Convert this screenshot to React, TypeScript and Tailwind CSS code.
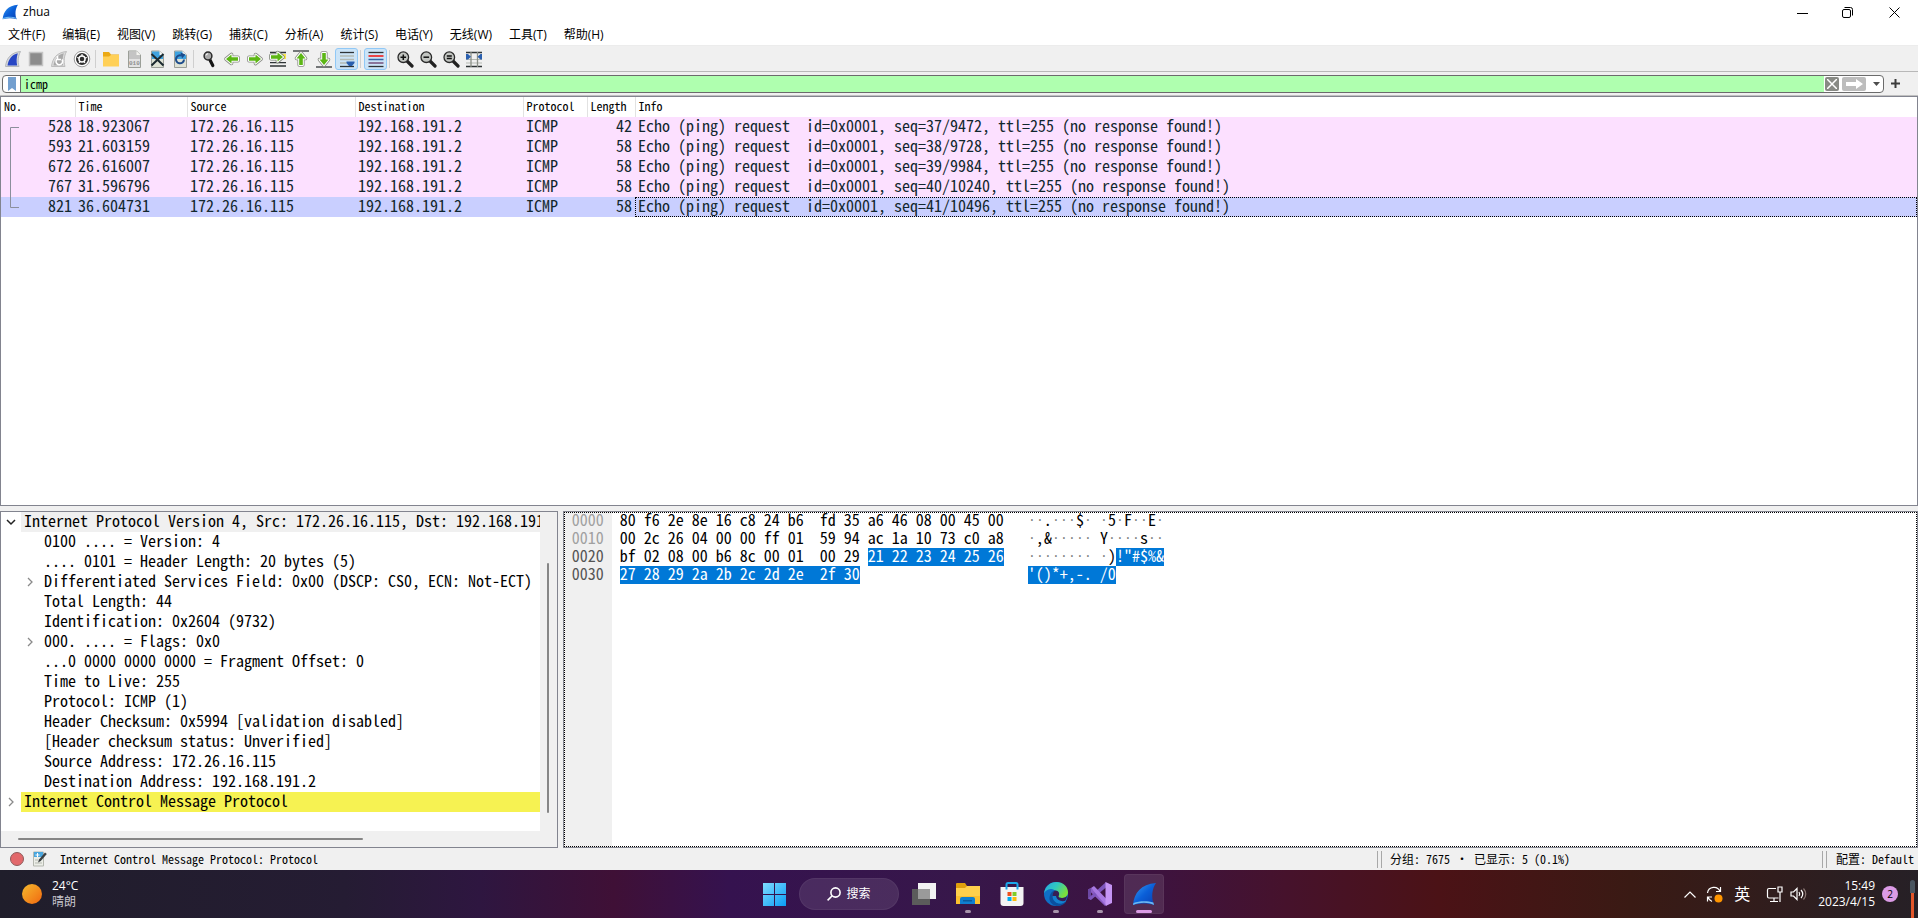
import React, { useState } from "react";

const mono =
  "font-['Noto_Sans_Mono_CJK_SC','Liberation_Mono','Noto_Sans_CJK_SC',monospace]";
const sans = "font-['Open_Sans','Noto_Sans_CJK_SC',sans-serif]";

const menus = [
  "文件(F)",
  "编辑(E)",
  "视图(V)",
  "跳转(G)",
  "捕获(C)",
  "分析(A)",
  "统计(S)",
  "电话(Y)",
  "无线(W)",
  "工具(T)",
  "帮助(H)",
];

const columns = [
  { name: "No.", width: "w-[74px]" },
  { name: "Time", width: "w-[112px]" },
  { name: "Source", width: "w-[168px]" },
  { name: "Destination", width: "w-[168px]" },
  { name: "Protocol", width: "w-[64px]" },
  { name: "Length", width: "w-[48px]" },
  { name: "Info", width: "" },
];

const packets = [
  { no: 528, time: "18.923067", length: 42, seq: "37/9472" },
  { no: 593, time: "21.603159", length: 58, seq: "38/9728" },
  { no: 672, time: "26.616007", length: 58, seq: "39/9984" },
  { no: 767, time: "31.596796", length: 58, seq: "40/10240" },
  { no: 821, time: "36.604731", length: 58, seq: "41/10496" },
];

const fields = [
  { text: "0100 .... = Version: 4" },
  { text: ".... 0101 = Header Length: 20 bytes (5)" },
  {
    text: "Differentiated Services Field: 0x00 (DSCP: CS0, ECN: Not-ECT)",
    branch: true,
  },
  { text: "Total Length: 44" },
  { text: "Identification: 0x2604 (9732)" },
  { text: "000. .... = Flags: 0x0", branch: true },
  { text: "...0 0000 0000 0000 = Fragment Offset: 0" },
  { text: "Time to Live: 255" },
  { text: "Protocol: ICMP (1)" },
  { text: "Header Checksum: 0x5994 [validation disabled]" },
  { text: "[Header checksum status: Unverified]" },
  { text: "Source Address: 172.26.16.115" },
  { text: "Destination Address: 192.168.191.2" },
];

const hexRows = [
  {
    offset: "0000",
    hex: "80 f6 2e 8e 16 c8 24 b6  fd 35 a6 46 08 00 45 00",
    hexSel: "",
    ascii: "··.···$· ·5·F··E·",
    asciiSel: "",
  },
  {
    offset: "0010",
    hex: "00 2c 26 04 00 00 ff 01  59 94 ac 1a 10 73 c0 a8",
    hexSel: "",
    ascii: "·,&····· Y····s··",
    asciiSel: "",
  },
  {
    offset: "0020",
    hex: "bf 02 08 00 b6 8c 00 01  00 29 ",
    hexSel: "21 22 23 24 25 26",
    ascii: "········ ·)",
    asciiSel: "!\"#$%&",
  },
  {
    offset: "0030",
    hex: "",
    hexSel: "27 28 29 2a 2b 2c 2d 2e  2f 30",
    ascii: "",
    asciiSel: "'()*+,-. /0",
  },
];

function Svg({ size = 18, children }: any) {
  return (
    <svg
      width={size}
      height={size}
      viewBox="0 0 18 18"
      fill="none"
      className="block shrink-0"
    >
      {children}
    </svg>
  );
}

function Fin({ size = 16, id = "fin" }: any) {
  return (
    <svg width={size} height={size} viewBox="0 0 24 24" className="block">
      <defs>
        <linearGradient id={id} x1="0" y1="0" x2="1" y2="1">
          <stop offset="0" stopColor="#3aa0f5" />
          <stop offset="0.5" stopColor="#0a5fd8" />
          <stop offset="1" stopColor="#0a3fb0" />
        </linearGradient>
      </defs>
      <path
        d="M1 23C2 11 9 2 24 1c-4 6-5 14-2 22-6-2-14-2-21 0z"
        fill={`url(#${id})`}
      />
      <path d="M1 23c7-3 15-3 21 0l-.6-2.400C15 18.500 7 19 1.500 21z" fill="#6db8f2" />
    </svg>
  );
}

function Doc({ fill, top, children }: any) {
  return (
    <Svg>
      <path d="M3.500 1h8l4 4v12.500h-12z" fill={fill} stroke="#9b9f98" />
      <path d="M4 1.500h7.300l3.700 3.700V9H4z" fill={top} />
      <path d="M11.500 1v4h4z" fill="#f4f4f0" />
      {children}
    </Svg>
  );
}

function Lens({ sign }: any) {
  return (
    <Svg>
      <path d="M10.500 10.500l5.500 5.500" stroke="#222" strokeWidth="3.200" strokeLinecap="round" />
      <circle cx="7.300" cy="7.200" r="5.300" fill="#c3c6c2" stroke="#2a2a2a" strokeWidth="1.300" />
      <path d={sign} stroke="#111" strokeWidth="1.500" />
    </Svg>
  );
}

const greenArrow = "M3 9l5.500-4.500v2.700h6.500v3.600H8.500v2.700z";

function GreenArrow({ rotate = 0, bar = "" }: any) {
  return (
    <Svg>
      {bar && <path d={bar} stroke="#2f3436" strokeWidth="1.300" />}
      <g transform={`rotate(${rotate} 9 9)`}>
        <path
          d={greenArrow}
          fill="#fff"
          stroke="#8a8d86"
          strokeWidth="3.600"
          strokeLinejoin="round"
        />
        <path
          d={greenArrow}
          fill="#5cb615"
          stroke="#fff"
          strokeWidth="2"
          strokeLinejoin="round"
        />
        <path d={greenArrow} fill="#5cb615" />
      </g>
    </Svg>
  );
}

const tools: any[] = [
  {
    label: "开始捕获分组",
    icon: (
      <Svg>
        <path d="M1.500 16.500C2.500 8 7 2.500 16.500 1.500c-2.500 4.500-3 10-1.500 15z" fill="#d6d8dc" stroke="#b4b7bb" />
        <path d="M3.500 15.500C4.500 9 8 4.500 13.800 3.200c-1.300 4-1.600 8.300-.6 12.300z" fill="#2746c4" />
      </Svg>
    ),
  },
  {
    label: "停止捕获分组",
    icon: (
      <Svg>
        <path d="M2.500 2.500h13v13h-13z" fill="#8c8c8c" stroke="#c4c4c4" strokeWidth="1.500" />
      </Svg>
    ),
  },
  {
    label: "重新开始当前捕获",
    icon: (
      <Svg>
        <path d="M1.500 16.500C2.500 8 7 2.500 16.500 1.500c-2.500 4.500-3 10-1.500 15z" fill="#dcdcdc" stroke="#bdbdbd" />
        <path d="M3.500 15.500C4.500 9 8 4.500 13.800 3.200c-1.300 4-1.600 8.300-.6 12.300z" fill="#a9a9a9" />
        <path d="M12 9.500a3.300 3.300 0 1 1-4.500-.8M7.500 6v3.500H11" stroke="#fff" strokeWidth="1.600" />
      </Svg>
    ),
  },
  {
    label: "捕获选项",
    icon: (
      <Svg>
        <circle cx="9" cy="9" r="7.800" fill="#fff" stroke="#9a9a9a" />
        <circle cx="9" cy="9" r="4.900" stroke="#2d2d2d" strokeWidth="2.200" />
        <path d="M9 4v2.500M4.200 7.500l2.400.8M13.800 7.500l-2.400.8M6 13l1.500-2M12 13l-1.500-2" stroke="#fff" strokeWidth="1.200" />
        <circle cx="9" cy="9" r="2.300" fill="#2d2d2d" />
      </Svg>
    ),
  },
  null,
  {
    label: "打开",
    icon: (
      <Svg>
        <path d="M1 2h6l2 2.500h8V16H1z" fill="#eba914" />
        <path d="M1 6.500h6L9 5h8v11.500H1z" fill="#ffd057" />
      </Svg>
    ),
  },
  {
    label: "保存",
    icon: (
      <Doc fill="#e3e3e3" top="#c4c4c4">
        <text x="4" y="14.500" fontSize="6" fontFamily="Liberation Mono" fontWeight="bold" fill="#909090">
          010
        </text>
      </Doc>
    ),
  },
  {
    label: "关闭",
    icon: (
      <Doc fill="#dfe3d6" top="#3fa3e0">
        <path d="M3.500 4l12 11.500M15.500 4l-12 11.500" stroke="#1c2a30" strokeWidth="2" />
      </Doc>
    ),
  },
  {
    label: "重新加载",
    icon: (
      <Doc fill="#dfe3d6" top="#3fa3e0">
        <path d="M13 9.500a4 4 0 1 1-2.300-3.800" stroke="#1c4c8c" strokeWidth="2" />
        <path d="M9.500 2.500l5 2-3.500 4z" fill="#1c4c8c" />
      </Doc>
    ),
  },
  null,
  {
    label: "查找分组",
    icon: (
      <Svg>
        <path d="M10 10l2.800 5.500" stroke="#151515" strokeWidth="3.200" strokeLinecap="round" />
        <circle cx="8" cy="6" r="3.900" fill="#a9a9a9" stroke="#2a2a2a" strokeWidth="1.500" />
        <path d="M6 5.500a2 2 0 0 1 2-1.700" stroke="#fff" />
      </Svg>
    ),
  },
  { label: "前一分组", icon: <GreenArrow /> },
  { label: "后一分组", icon: <GreenArrow rotate={180} /> },
  {
    label: "转到特定分组",
    icon: (
      <Svg>
        <path d="M1 2.500h16M1 12.700h16M1 16h16" stroke="#2f3436" strokeWidth="1.300" />
        <path d="M11 4h6v5h-6z" fill="#fbe64a" />
        <g transform="translate(-1 -2) rotate(180 9 9)">
          <path d={greenArrow} fill="#fff" stroke="#7f857a" strokeWidth="3.600" strokeLinejoin="round" />
          <path d={greenArrow} fill="#fff" stroke="#fff" strokeWidth="2" strokeLinejoin="round" />
          <path d={greenArrow} fill="#5cb615" />
        </g>
      </Svg>
    ),
  },
  { label: "首个分组", icon: <GreenArrow rotate={90} bar="M1 1h16" /> },
  { label: "最新分组", icon: <GreenArrow rotate={270} bar="M1 17h16" /> },
  {
    label: "自动滚动",
    active: true,
    icon: (
      <Svg>
        <path d="M2 2.500h14" stroke="#2f3436" strokeWidth="1.300" />
        <path d="M2 6h14M2 9.500h14M2 13h7" stroke="#b4b9b2" strokeWidth="1.300" />
        <path d="M2 16.500h14" stroke="#2f3436" strokeWidth="1.300" />
        <path d="M8.500 11.500h8v1.500l-2.500 3h-3l-2.500-3z" fill="#2a5fae" />
      </Svg>
    ),
  },
  null,
  {
    label: "着色分组",
    active: true,
    icon: (
      <Svg>
        <path d="M1.500 2.500h15" stroke="#2f3436" strokeWidth="1.300" />
        <path d="M1.500 6h15" stroke="#ef2929" strokeWidth="1.700" />
        <path d="M1.500 9.500h15" stroke="#3465a4" strokeWidth="1.500" />
        <path d="M1.500 13h15" stroke="#75507b" strokeWidth="1.500" />
        <path d="M1.500 16.500h15" stroke="#2f3436" strokeWidth="1.300" />
      </Svg>
    ),
  },
  null,
  { label: "放大", icon: <Lens sign="M4.500 7.200h5.600M7.300 4.400V10" /> },
  { label: "缩小", icon: <Lens sign="M4.500 7.200h5.600" /> },
  { label: "普通大小", icon: <Lens sign="M4.800 6h5M4.800 8.400h5" /> },
  {
    label: "调整列宽",
    icon: (
      <Svg>
        <path d="M1 2.500h16M1 16.500h16" stroke="#2f3436" strokeWidth="1.300" />
        <path d="M1 9.500h16M1 13h16" stroke="#b4b9b2" />
        <path d="M6 2v15M12.500 2v15" stroke="#8b9088" strokeWidth="1.300" />
        <path d="M1 4h2l3 2.700L3 9.500H1zM17 4h-1.500l-3 2.700 3 2.800H17z" fill="#2a5fae" />
      </Svg>
    ),
  },
];

function Chevron({ open }: any) {
  return (
    <svg width="10" height="10" viewBox="0 0 10 10" fill="none" className="block">
      {open ? (
        <path d="M1 3l4 4 4-4" stroke="#222" strokeWidth="1.500" />
      ) : (
        <path d="M3 1l4 4-4 4" stroke="#8a8a8a" strokeWidth="1.300" />
      )}
    </svg>
  );
}

// non-printable bytes come as dots, one 8px cell each
function Ascii({ text }: any) {
  return text.split("").map((char: string, index: number) => (
    <span
      key={index}
      className={
        char == "·"
          ? "w-[8px] text-center font-['Liberation_Mono',monospace] text-[13px] leading-[18px] text-[#808080]"
          : ""
      }
    >
      {char}
    </span>
  ));
}

const taskApps = [
  {
    label: "任务视图",
    icon: (
      <svg width="24" height="24" viewBox="0 0 24 24">
        <path d="M6 1h18v16H6z" fill="#f2f2f2" />
        <path d="M0 7h18v16H0z" fill="#5b5b5b" />
        <path d="M6 7h12v10H6z" fill="#9a9a9a" />
      </svg>
    ),
  },
  {
    label: "文件资源管理器",
    running: true,
    icon: (
      <svg width="24" height="24" viewBox="0 0 24 24">
        <path d="M0 2q0-1 1-1h8l2 3v3H0z" fill="#e0a00c" />
        <path d="M0 6h9l2-2h13v18H0z" fill="#ffd04c" />
        <path d="M0 14h24v8H0z" fill="#fcc02e" />
        <path d="M4 22v-5q0-2 2-2h11q2 0 2 2v5z" fill="#0f7fd0" />
        <path d="M7 18h9v1.500H7z" fill="#0a5a9c" />
      </svg>
    ),
  },
  {
    label: "Microsoft Store",
    icon: (
      <svg width="24" height="24" viewBox="0 0 24 24">
        <path d="M6.500 8V2.500q0-1.500 1.500-1.500h8q1.500 0 1.500 1.500V8" fill="none" stroke="#1ba7ea" strokeWidth="2" />
        <path d="M.5 5h23v16q0 3-3 3h-17q-3 0-3-3z" fill="#f3f3f3" />
        <path d="M7.500 10h4v4h-4z" fill="#f1511b" />
        <path d="M12.500 10h4v4h-4z" fill="#80cc28" />
        <path d="M7.500 15h4v4h-4z" fill="#00adef" />
        <path d="M12.500 15h4v4h-4z" fill="#fbbc09" />
        <path d="M6.500 5v2.500M17.500 5v2.500" stroke="#1ba7ea" strokeWidth="2" />
      </svg>
    ),
  },
  {
    label: "Microsoft Edge",
    running: true,
    icon: (
      <svg width="24" height="24" viewBox="0 0 24 24">
        <defs>
          <linearGradient id="edge" x1="0" y1="0" x2="1" y2=".5">
            <stop offset="0" stopColor="#2aa5e0" />
            <stop offset=".5" stopColor="#2fc7c0" />
            <stop offset="1" stopColor="#7be03c" />
          </linearGradient>
        </defs>
        <circle cx="12" cy="12" r="12" fill="#0f6fc6" />
        <path d="M0 11.500C1 4.500 6 0 12.500 0 19 0 24 4.500 24 10.500c0 3-2.500 5.500-6 5.500-2.500 0-4-1-3.500-2 1.500-2 .5-5.500-3.500-5.500C6 5 1.500 8 0 11.500z" fill="url(#edge)" />
        <path d="M8.500 14c0 4.500 4 8 8.500 7.500 2 0 4-.8 5.300-2-2 3-5.800 4.900-9.800 4.500C8 23.500 5 19.500 5.500 15.500 6 11 9 8.500 11 8.500c-1.500 1-2.500 3-2.500 5.500z" fill="#0b4f9e" />
        <path d="M14.500 14c-.5 1 1 2 3.500 2 2.200 0 4-.8 5-2.200-.1 2-1 4.200-2.500 5.700-5 2.500-12-.5-12-5.500 0-3 1.500-5 2.500-5.500 4 0 5 3.500 3.500 5.500z" fill="#3b1648" opacity=".9" />
        <path d="M8.500 14c0 5 5 9 10.500 7 1.500-.5 3-1.500 3.500-2.500-5 2-10-.5-10.500-4.500z" fill="#1380cf" />
      </svg>
    ),
  },
  {
    label: "Visual Studio",
    running: true,
    icon: (
      <svg width="24" height="24" viewBox="0 0 24 24">
        <path d="M0 7.500L3 6l15 13-1 5z" fill="#8a5cc4" />
        <path d="M0 7.500v9L3 18V6z" fill="#6b47a3" />
        <path d="M0 16.500L3 18 18 5.500V0z" fill="#7d55bd" />
        <path d="M3 6l3-2 12.500 13V24z" fill="#a878e2" />
        <path d="M17.500 0L24 3v18l-6.500 3z" fill="#c594f5" />
      </svg>
    ),
  },
];

export default function App() {
  const [filter, setFilter] = useState("icmp");
  const [selected, setSelected] = useState(821);

  return (
    <div className={`flex h-screen flex-col overflow-hidden bg-[#f0f0f0] text-[12px] text-black ${sans}`}>
      <header className="flex h-[24px] shrink-0 items-center justify-between bg-white pl-[2px]">
        <div className="flex items-center gap-[5px]">
          <Fin size={16} id="titleFin" />
          <h1 className="leading-[16px]">zhua</h1>
        </div>
        <div className="flex">
          <button aria-label="最小化" className="flex w-[45px] justify-center">
            <svg width="11" height="11" stroke="#000">
              <path d="M0 6.500h11" />
            </svg>
          </button>
          <button aria-label="还原" className="flex w-[45px] justify-center">
            <svg width="11" height="11" fill="none" stroke="#000">
              <rect x=".5" y="2.500" width="8" height="8" rx="1.500" />
              <path d="M2.500 .5H8.500a2 2 0 0 1 2 2v6" />
            </svg>
          </button>
          <button aria-label="关闭窗口" className="flex w-[48px] justify-center">
            <svg width="11" height="11" stroke="#000">
              <path d="M.5 .5l10 10M10.500 .5l-10 10" />
            </svg>
          </button>
        </div>
      </header>

      <nav className="flex h-[22px] shrink-0 items-center gap-px border-b border-[#ececec] bg-white">
        {menus.map((item) => (
          <button key={item} className="px-2 leading-[20px]">
            {item}
          </button>
        ))}
      </nav>

      <div className="flex h-[26px] shrink-0 items-center border-b border-[#b8b8b8] px-px">
        {tools.map((tool, index) =>
          tool ? (
            <button
              key={index}
              aria-label={tool.label}
              className={`flex h-[22px] w-[23px] items-center justify-center rounded-[3px] border ${
                tool.active
                  ? "border-[#90c8f6] bg-[#cce4f7]"
                  : "border-transparent"
              }`}
            >
              {tool.icon}
            </button>
          ) : (
            <span key={index} className="mx-[2px] h-[18px] w-[2px] border-l border-[#cfcfcf]" />
          )
        )}
      </div>

      <div className="flex h-[24px] shrink-0 items-center gap-[6px] border-b border-[#c0c0c0] pl-[2px] pr-[18px]">
        <div className="flex h-[18px] flex-1 items-center overflow-hidden rounded-[4px] border border-[#6b6b6b] bg-white">
          <button aria-label="书签" className="flex h-full w-[18px] shrink-0 items-center justify-center border-r border-[#6b6b6b]">
            <svg width="8" height="14" viewBox="0 0 8 14" className="block">
              <path d="M0 0h8v14l-4-3-4 3z" fill="#729fcf" />
            </svg>
          </button>
          <input
            aria-label="显示过滤器"
            value={filter}
            onChange={(e) => setFilter(e.target.value)}
            className={`h-full min-w-0 flex-1 bg-[#afffaf] px-[3px] leading-[16px] outline-none ${mono}`}
          />
          <button
            aria-label="清除"
            onClick={() => setFilter("")}
            className="ml-px flex size-[14px] items-center justify-center rounded-[2px] bg-[#888a85]"
          >
            <svg width="10" height="10" stroke="#fff" strokeWidth="1.500">
              <path d="M0 0l10 10M10 0L0 10" />
            </svg>
          </button>
          <button aria-label="应用" className="ml-[3px] flex h-[14px] w-[24px] items-center justify-center rounded-[2px] bg-[#bdbdbd]">
            <svg width="17" height="10" fill="#fff">
              <path d="M0 3h10V0l7 5-7 5V7H0z" />
            </svg>
          </button>
          <button aria-label="历史" className="flex h-full w-[17px] items-center justify-center pl-[3px]">
            <svg width="7" height="4" fill="#4d4d4d">
              <path d="M0 0h7L3.500 4z" />
            </svg>
          </button>
        </div>
        <button aria-label="添加过滤器按钮" className="flex size-[10px] items-center justify-center">
          <svg width="9" height="9" stroke="#3c3c3c" strokeWidth="2">
            <path d="M0 4.500h9M4.500 0v9" />
          </svg>
        </button>
      </div>

      <main className="flex min-h-0 flex-1 flex-col gap-[5px]">
        <section className="relative min-h-0 flex-[409] overflow-hidden border border-[#82848f] bg-white">
          <table className={`w-full table-fixed border-collapse ${mono}`}>
            <thead>
              <tr className="h-[20px]">
                {columns.map((col) => (
                  <th
                    key={col.name}
                    className={`border-r border-[#e2e2e2] px-[3px] py-0 text-left align-top font-normal leading-[18px] last:border-r-0 ${col.width}`}
                  >
                    {col.name}
                  </th>
                ))}
              </tr>
            </thead>
            <tbody className="whitespace-pre text-[16px] leading-[16px] text-[#12272e]">
              {packets.map((item) => (
                <tr
                  key={item.no}
                  onClick={() => setSelected(item.no)}
                  className={`h-[20px] align-top ${
                    selected == item.no ? "bg-[#c9cfff]" : "bg-[#fce0ff]"
                  }`}
                >
                  <td className="px-[3px] py-0 text-right">{item.no}</td>
                  <td className="px-[3px] py-0">{item.time}</td>
                  <td className="px-[3px] py-0">172.26.16.115</td>
                  <td className="px-[3px] py-0">192.168.191.2</td>
                  <td className="px-[3px] py-0">ICMP</td>
                  <td className="px-[3px] py-0 text-right">{item.length}</td>
                  <td
                    className={`px-[3px] py-0 ${
                      selected == item.no
                        ? "outline-1 -outline-offset-1 outline-dotted outline-black"
                        : ""
                    }`}
                  >
                    {`Echo (ping) request  id=0x0001, seq=${item.seq}, ttl=255 (no response found!)`}
                  </td>
                </tr>
              ))}
            </tbody>
          </table>
          <svg
            width="10"
            height="82"
            fill="none"
            stroke="#8b8f9c"
            className="pointer-events-none absolute left-[9px] top-[30px]"
          >
            <path d="M9 .5H.5v80H9" />
          </svg>
        </section>

        <div className="flex min-h-0 flex-[337] gap-[5px]">
          <section className="flex min-w-0 flex-[557] flex-col border border-[#82848f]">
            <div className="flex min-h-0 flex-1">
              <div className={`min-w-0 flex-1 overflow-hidden whitespace-pre bg-white text-[16px] leading-[16px] ${mono}`}>
                <div className="flex h-[20px]">
                  <button aria-label="折叠" className="flex w-[20px] shrink-0 items-center justify-center">
                    <Chevron open />
                  </button>
                  <p className="min-w-0 flex-1 overflow-hidden bg-[#f0f0f0] pl-[3px]">
                    Internet Protocol Version 4, Src: 172.26.16.115, Dst: 192.168.191.2
                  </p>
                </div>
                {fields.map((item) => (
                  <div key={item.text} className="flex h-[20px] pl-[20px]">
                    <div className="flex w-[23px] shrink-0 items-center pl-[4px]">
                      {item.branch && (
                        <button aria-label="展开">
                          <Chevron />
                        </button>
                      )}
                    </div>
                    <p>{item.text}</p>
                  </div>
                ))}
                <div className="flex h-[20px]">
                  <button aria-label="展开" className="flex w-[20px] shrink-0 items-center justify-center">
                    <Chevron />
                  </button>
                  <p className="flex-1 bg-[#f6f252] pl-[3px]">
                    Internet Control Message Protocol
                  </p>
                </div>
              </div>
              <div className="flex w-[17px] shrink-0 justify-center pb-[18px] pt-[51px]">
                <div className="w-[2px] rounded-full bg-[#868686]" />
              </div>
            </div>
            <div className="flex h-[16px] shrink-0 items-center pl-[17px]">
              <div className="h-[2px] w-[64%] rounded-full bg-[#868686]" />
            </div>
          </section>

          <section className="min-w-0 flex-[1356] border border-[#82848f]">
            <div className={`flex h-full whitespace-pre bg-white text-[16px] leading-[14px] outline-1 -outline-offset-1 outline-dotted outline-black ${mono}`}>
              <div className="w-[48px] shrink-0 bg-[#f0f0f0] pl-[8px]">
                {hexRows.map((item, index) => (
                  <p
                    key={item.offset}
                    className={`h-[18px] ${index < 2 ? "text-[#a0a0a0]" : "text-[#555]"}`}
                  >
                    {item.offset}
                  </p>
                ))}
              </div>
              <div className="pl-[8px]">
                {hexRows.map((item) => (
                  <p key={item.offset} className="flex h-[18px]">
                    {item.hex && <span>{item.hex}</span>}
                    {item.hexSel && (
                      <span className="bg-[#0078d7] text-white">{item.hexSel}</span>
                    )}
                  </p>
                ))}
              </div>
              <div className="pl-[24px]">
                {hexRows.map((item) => (
                  <p key={item.offset} className="flex h-[18px]">
                    <Ascii text={item.ascii} />
                    {item.asciiSel && (
                      <span className="bg-[#0078d7] text-white">{item.asciiSel}</span>
                    )}
                  </p>
                ))}
              </div>
            </div>
          </section>
        </div>
      </main>

      <footer className={`flex h-[22px] shrink-0 items-center whitespace-pre pl-[10px] pr-[4px] leading-[20px] ${mono}`}>
        <button aria-label="专家信息" className="size-[14px] rounded-full border border-[#8e5b5b] bg-[#e2686b]" />
        <button aria-label="捕获文件属性" className="ml-[8px]">
          <svg width="16" height="16" viewBox="0 0 16 16" className="block">
            <path d="M1.500 1h10v14h-10z" fill="#eceee8" stroke="#b5b8b0" />
            <path d="M2 1h9v5H2z" fill="#4aa6de" />
            <path d="M5.500 2v4M3.500 4h4" stroke="#fff" />
            <path d="M3 9h3M3 12h7" stroke="#b5b8b0" />
            <path d="M6 11.500l1-3L13 1.500l1.800 1.400-6 7z" fill="#3a3f42" />
          </svg>
        </button>
        <p className="min-w-0 flex-1 overflow-hidden pl-[12px]">
          Internet Control Message Protocol: Protocol
        </p>
        <div className="flex w-[445px] items-center gap-[8px]">
          <span className="h-[17px] w-[5px] border-x border-[#a8a8a8]" />
          <p>分组: 7675 · 已显示: 5 (0.1%)</p>
        </div>
        <div className="flex items-center gap-[9px]">
          <span className="h-[17px] w-[5px] border-x border-[#a8a8a8]" />
          <p>配置: Default</p>
        </div>
      </footer>

      <div className="grid h-[48px] shrink-0 grid-cols-[1fr_auto_1fr] items-center bg-[linear-gradient(90deg,#201e2b_0%,#251c33_18%,#2e1640_25%,#3f1036_32%,#35124f_38%,#37174a_50%,#3d1340_60%,#46122c_67%,#4b1216_75%,#3a1a14_85%,#262026_100%)] text-white">
        <button className="flex items-center gap-[10px] justify-self-start pl-[22px] text-left leading-[16px]">
          <span className="size-[20px] rounded-full bg-linear-to-br from-[#f3b92d] to-[#f0650e]" />
          <span>
            24°C
            <br />
            <span className="text-[#c8c6cc]">晴朗</span>
          </span>
        </button>

        <div className="flex items-center gap-1">
          <button aria-label="开始" className="flex size-[40px] items-center justify-center">
            <svg width="23" height="23" viewBox="0 0 23 23">
              <defs>
                <linearGradient id="win" x1="0" y1="0" x2="1" y2="1">
                  <stop offset="0" stopColor="#7fdcff" />
                  <stop offset="1" stopColor="#0a9cf5" />
                </linearGradient>
              </defs>
              <path d="M0 0h11v11H0zM12 0h11v11H12zM0 12h11v11H0zM12 12h11v11H12z" fill="url(#win)" />
            </svg>
          </button>
          <button className="mx-px flex h-[32px] w-[100px] items-center justify-center gap-[5px] rounded-full border border-white/5 bg-white/10">
            <svg width="14" height="14" fill="none" stroke="#fff" strokeWidth="1.600">
              <circle cx="8.500" cy="5.500" r="4.600" />
              <path d="M5.200 8.800L.6 13.400" />
            </svg>
            搜索
          </button>
          {taskApps.map((item) => (
            <button
              key={item.label}
              aria-label={item.label}
              className="relative flex size-[40px] items-center justify-center"
            >
              {item.icon}
              {item.running && (
                <span className="absolute bottom-px left-[17px] h-[3px] w-[6px] rounded-full bg-[#a794ab]" />
              )}
            </button>
          ))}
          <button
            aria-label="Wireshark"
            className="relative flex size-[40px] items-center justify-center rounded-[4px] border border-white/5 bg-white/10"
          >
            <Fin size={24} id="taskFin" />
            <span className="absolute bottom-0 left-[11px] h-[3px] w-[16px] rounded-full bg-[#dc9be6]" />
          </button>
        </div>

        <div className="flex h-full items-center justify-self-end">
          <button aria-label="显示隐藏的图标" className="mr-[10px]">
            <svg width="12" height="7" fill="none" stroke="#fff" strokeWidth="1.200">
              <path d="M.5 6.500L6 1l5.500 5.500" />
            </svg>
          </button>
          <button aria-label="更新" className="mr-[11px]">
            <svg width="17" height="17" fill="none" stroke="#fff" strokeWidth="1.200">
              <path d="M1.500 7A6.500 6.500 0 0 1 14 5.500M14.500 1v4.500H10M6 15.500A7 7 0 0 1 2 11M1.500 15.500V11H6" />
              <circle cx="12.500" cy="12.500" r="4" fill="#ff9500" stroke="none" />
            </svg>
          </button>
          <button className="mr-[16px] text-[16px] leading-[20px]">英</button>
          <button aria-label="网络和音量" className="mr-[11px] flex items-center gap-[7px]">
            <svg width="17" height="17" fill="none" stroke="#fff" strokeWidth="1.200">
              <path d="M10 2.500H3a1.500 1.500 0 0 0-1.500 1.500v6.500A1.500 1.500 0 0 0 3 12h9.500M8 12v3.500M4 15.500h8M12 1h4v5h-4zM14 6v10" />
            </svg>
            <svg width="17" height="14" fill="none" stroke="#fff" strokeWidth="1.200">
              <path d="M1 5v4h2.500L7 12.500v-11L3.500 5zM9 5q1.500 2 0 4M11 3q3.500 4 0 8" />
              <path d="M13.500 1.500q4.500 5.500 0 11" stroke="#8a7773" />
            </svg>
          </button>
          <button className="flex items-center gap-[7px] text-right leading-[16px]">
            <span>
              15:49
              <br />
              2023/4/15
            </span>
            <span className="flex size-[16px] items-center justify-center rounded-full bg-[#dc9be6] text-[10px] text-black">
              2
            </span>
          </button>
          <div className="ml-[12px] mr-[3px] flex w-[5px] flex-col self-stretch pt-[10px]">
            <div className="h-[13px] rounded-t-full bg-[#4a5560]" />
            <div className="mx-px flex-1 bg-[#e2562b]" />
          </div>
        </div>
      </div>
    </div>
  );
}
